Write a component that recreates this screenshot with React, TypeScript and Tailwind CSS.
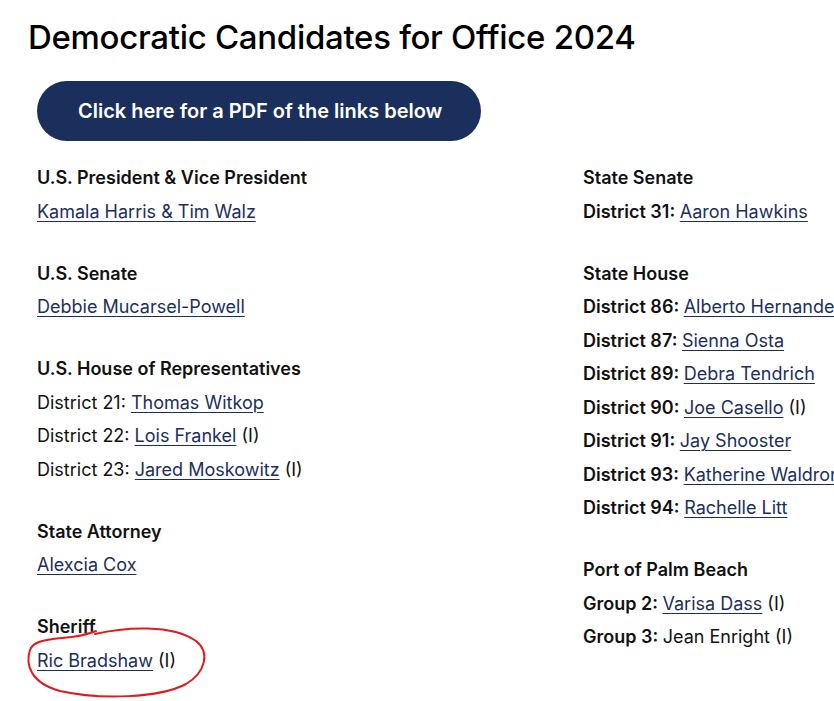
const navy = 'text-[#1b2f5c]';

type Entry = { label?: string; name: string; link?: boolean; inc?: boolean };
type Section = { title: string; bold?: boolean; entries: Entry[] };

const left: Section[] = [
  { title: 'U.S. President & Vice President', entries: [{ name: 'Kamala Harris & Tim Walz', link: true }] },
  { title: 'U.S. Senate', entries: [{ name: 'Debbie Mucarsel-Powell', link: true }] },
  {
    title: 'U.S. House of Representatives',
    entries: [
      { label: 'District 21:', name: 'Thomas Witkop', link: true },
      { label: 'District 22:', name: 'Lois Frankel', link: true, inc: true },
      { label: 'District 23:', name: 'Jared Moskowitz', link: true, inc: true },
    ],
  },
  { title: 'State Attorney', entries: [{ name: 'Alexcia Cox', link: true }] },
  { title: 'Sheriff', entries: [{ name: 'Ric Bradshaw', link: true, inc: true }] },
];

const right: Section[] = [
  { title: 'State Senate', bold: true, entries: [{ label: 'District 31:', name: 'Aaron Hawkins', link: true }] },
  {
    title: 'State House',
    bold: true,
    entries: [
      { label: 'District 86:', name: 'Alberto Hernandez', link: true },
      { label: 'District 87:', name: 'Sienna Osta', link: true },
      { label: 'District 89:', name: 'Debra Tendrich', link: true },
      { label: 'District 90:', name: 'Joe Casello', link: true, inc: true },
      { label: 'District 91:', name: 'Jay Shooster', link: true },
      { label: 'District 93:', name: 'Katherine Waldron', link: true },
      { label: 'District 94:', name: 'Rachelle Litt', link: true },
    ],
  },
  {
    title: 'Port of Palm Beach',
    bold: true,
    entries: [
      { label: 'Group 2:', name: 'Varisa Dass', link: true, inc: true },
      { label: 'Group 3:', name: 'Jean Enright', inc: true },
    ],
  },
];

function Column({ sections }: { sections: Section[] }) {
  return (
    <div className="flex flex-col gap-[28.5px]">
      {sections.map((s) => (
        <div key={s.title}>
          <div className="font-semibold leading-[33.5px] text-[#111]">{s.title}</div>
          {s.entries.map((e) => (
            <div key={e.name} className="leading-[33.5px] whitespace-nowrap text-[#111]">
              {e.label && <span className={s.bold ? 'font-semibold' : ''}>{e.label} </span>}
              {e.link ? (
                <a href="#" className={`${navy} underline underline-offset-[3px] decoration-1`}>
                  {e.name}
                </a>
              ) : (
                <span>{e.name}</span>
              )}
              {e.inc && <span> (I)</span>}
            </div>
          ))}
        </div>
      ))}
    </div>
  );
}

export default function App() {
  return (
    <div
      className="relative w-full h-[701px] overflow-hidden bg-white"
      style={{ fontFamily: 'Inter, "Noto Sans", sans-serif' }}
    >
      <h1 className="pl-[28px] pt-[17px] text-[33px] leading-[40px] font-medium tracking-[-0.3px] text-black">
        Democratic Candidates for Office 2024
      </h1>

      <div className="pl-[37px] mt-[24px]">
        <a
          href="#"
          className="inline-flex items-center h-[60px] w-[444px] pl-[41px] rounded-full bg-[#1b2f5c] text-white text-[20px] font-semibold"
        >
          Click here for a PDF of the links below
        </a>
      </div>

      <div className="grid grid-cols-[546px_1fr] pl-[37px] mt-[20px] text-[18px]">
        <Column sections={left} />
        <Column sections={right} />
      </div>

      <svg className="absolute left-0 top-0 pointer-events-none" width="834" height="701">
        <path
          d="M 95 634 C 125 627, 172 624, 196 641 C 210 652, 206 672, 186 684 C 160 698, 100 700, 60 691 C 31 683, 25 665, 30 650 C 33 642, 42 640, 62 638 C 76 637, 86 635, 96 631"
          fill="none"
          stroke="#e01b1b"
          strokeWidth="2"
          strokeLinecap="round"
        />
      </svg>
    </div>
  );
}
